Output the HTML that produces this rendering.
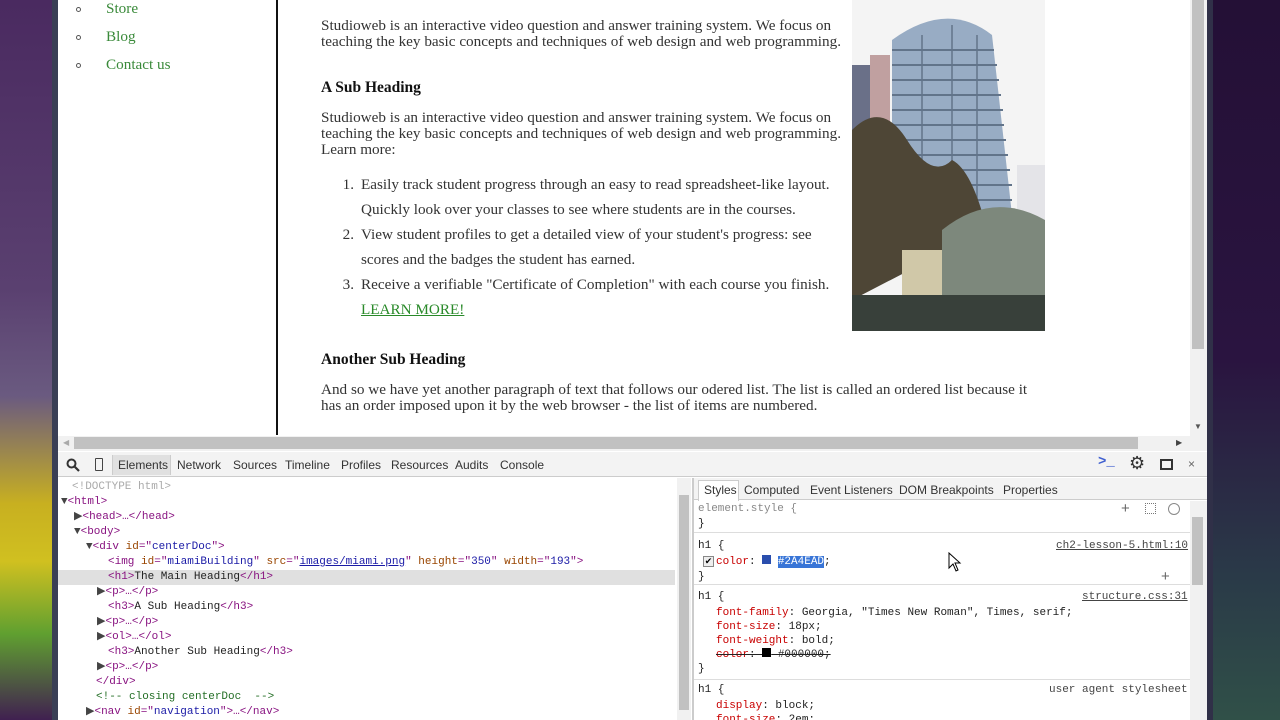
<!DOCTYPE html>
<html><head><style>
*{margin:0;padding:0;box-sizing:border-box}
html,body{width:1280px;height:720px;overflow:hidden}
body{position:relative;background:#2a1440;font-family:"Liberation Serif",serif}
.abs{position:absolute}
.ser{font-family:"Liberation Serif",serif;font-size:15.2px;color:#333}
.mono{font-family:"Liberation Mono",monospace;font-size:11px}
.sans{font-family:"Liberation Sans",sans-serif;font-size:12px;color:#333}
.dom div{position:absolute;white-space:pre;height:15px;line-height:15px}
.t{color:#881280}.a{color:#994500}.v{color:#1a1aa6}.c{color:#236e25}
.p{color:#c80000}
</style></head><body>
<div class="abs" style="left:0;top:0;width:52px;height:720px;background:linear-gradient(180deg,#4a2a60 0%,#5a4070 40%,#6a5a80 55%,#c8b020 70%,#d0c020 78%,#60a030 88%,#402050 100%)"></div>
<div class="abs" style="left:52px;top:0;width:6px;height:720px;background:#3a3f55"></div>
<div class="abs" style="left:1207px;top:0;width:6px;height:720px;background:#303048"></div>
<div class="abs" style="left:1213px;top:0;width:67px;height:720px;background:linear-gradient(180deg,#241036 0%,#2a1440 50%,#2a3a48 80%,#305048 100%)"></div>
<div class="abs" style="left:58px;top:0;width:1132px;height:436px;background:#fff"></div>
<div class="abs" style="left:276px;top:0;width:2px;height:435px;background:#111"></div>
<div class="abs ser" style="left:106px;top:-5px;color:#3a8a3a;line-height:28px">Store<br>Blog<br>Contact us</div>
<div class="abs" style="left:76px;top:7px;width:5px;height:5px;border:1px solid #555;border-radius:50%"></div>
<div class="abs" style="left:76px;top:35px;width:5px;height:5px;border:1px solid #555;border-radius:50%"></div>
<div class="abs" style="left:76px;top:63px;width:5px;height:5px;border:1px solid #555;border-radius:50%"></div>
<div class="abs ser" style="left:321px;top:18px;line-height:16px;width:530px">Studioweb is an interactive video question and answer training system. We focus on teaching the key basic concepts and techniques of web design and web programming.</div>
<div class="abs ser" style="left:321px;top:79px;font-weight:bold;color:#111;font-size:15.5px">A Sub Heading</div>
<div class="abs ser" style="left:321px;top:110px;line-height:16px;width:530px">Studioweb is an interactive video question and answer training system. We focus on teaching the key basic concepts and techniques of web design and web programming. Learn more:</div>
<div class="abs ser" style="left:321px;top:172px;line-height:25px;width:540px">
<div><span style="display:inline-block;width:40px;text-align:right;padding-right:7px">1.</span>Easily track student progress through an easy to read spreadsheet-like layout.</div>
<div style="padding-left:40px">Quickly look over your classes to see where students are in the courses.</div>
<div><span style="display:inline-block;width:40px;text-align:right;padding-right:7px">2.</span>View student profiles to get a detailed view of your student's progress: see</div>
<div style="padding-left:40px">scores and the badges the student has earned.</div>
<div><span style="display:inline-block;width:40px;text-align:right;padding-right:7px">3.</span>Receive a verifiable "Certificate of Completion" with each course you finish.</div>
<div style="padding-left:40px;color:#2a8a2a;text-decoration:underline">LEARN MORE!</div>
</div>
<div class="abs ser" style="left:321px;top:351px;font-weight:bold;color:#111;font-size:15.5px">Another Sub Heading</div>
<div class="abs ser" style="left:321px;top:382px;line-height:16px;width:718px">And so we have yet another paragraph of text that follows our odered list. The list is called an ordered list because it has an order imposed upon it by the web browser - the list of items are numbered.</div>
<svg class="abs" style="left:852px;top:0" width="193" height="331" viewBox="0 0 193 331">
<rect width="193" height="331" fill="#f4f4f4"/>
<rect x="0" y="65" width="22" height="120" fill="#6a7088"/>
<rect x="18" y="55" width="20" height="110" fill="#c0a0a0"/>
<path d="M40 40 Q95 0 140 35 L160 215 L120 225 L40 200 Z" fill="#98acc4"/>
<g stroke="#62748a" stroke-width="2">
<path d="M40 50H142M40 65H145M40 80H147M40 95H149M40 110H151M40 125H152M40 140H154M40 155H156M40 170H158M40 185H160M40 200H160"/>
<path d="M70 35V200M100 25V210M125 35V210" stroke-width="1.5"/></g>
<rect x="165" y="165" width="28" height="60" fill="#e4e4e8"/>
<path d="M0 130 Q30 100 55 140 Q80 180 100 160 Q120 170 135 230 L0 300 Z" fill="#4e4636"/>
<path d="M90 230 Q140 190 193 220 L193 320 L90 320 Z" fill="#7d887c"/>
<rect x="50" y="250" width="40" height="45" fill="#d0c8a8"/>
<rect x="0" y="295" width="193" height="36" fill="#38403a"/>
</svg>
<div class="abs" style="left:1190px;top:0;width:17px;height:436px;background:#f1f1f1"></div>
<div class="abs" style="left:1192px;top:0;width:12px;height:349px;background:#c1c1c1"></div>
<div class="abs" style="left:1194px;top:422px;color:#555;font-size:8px">▼</div>
<div class="abs" style="left:58px;top:436px;width:1149px;height:15px;background:#f1f1f1"></div>
<div class="abs" style="left:74px;top:437px;width:1064px;height:12px;background:#c1c1c1"></div>
<div class="abs" style="left:63px;top:438px;color:#aaa;font-size:8px">◀</div>
<div class="abs" style="left:1176px;top:438px;color:#444;font-size:8px">▶</div>
<div class="abs" style="left:58px;top:451px;width:1149px;height:269px;background:#fff"></div>
<div class="abs" style="left:58px;top:452px;width:1149px;height:25px;background:#f3f3f3;border-bottom:1px solid #ccc"></div>
<svg class="abs" style="left:66px;top:458px" width="14" height="14"><circle cx="5.5" cy="5.5" r="4" fill="none" stroke="#333" stroke-width="2"/><path d="M8.5 8.5L13 13" stroke="#333" stroke-width="2.2"/></svg>
<div class="abs" style="left:95px;top:458px;width:8px;height:13px;border:1.5px solid #444;border-radius:1px"></div>
<div class="abs" style="left:112px;top:455px;width:59px;height:20px;background:#e0e0e0;border-left:1px solid #ccc;border-right:1px solid #ccc"></div>
<div class="abs sans" style="left:118px;top:458px">Elements</div>
<div class="abs sans" style="left:177px;top:458px">Network</div>
<div class="abs sans" style="left:233px;top:458px">Sources</div>
<div class="abs sans" style="left:285px;top:458px">Timeline</div>
<div class="abs sans" style="left:341px;top:458px">Profiles</div>
<div class="abs sans" style="left:391px;top:458px">Resources</div>
<div class="abs sans" style="left:455px;top:458px">Audits</div>
<div class="abs sans" style="left:500px;top:458px">Console</div>
<div class="abs" style="left:1098px;top:454px;color:#4060d0;font-family:'Liberation Mono';font-size:14px;font-weight:bold">&gt;_</div>
<div class="abs" style="left:1129px;top:453px;color:#333;font-size:18px">⚙</div>
<div class="abs" style="left:1160px;top:459px;width:13px;height:11px;border:2px solid #333"></div>
<div class="abs sans" style="left:1188px;top:457px;color:#666">×</div>
<div class="abs" style="left:58px;top:570px;width:617px;height:15px;background:#e0e0e0"></div>
<div class="abs mono dom" style="left:0;top:0">
<div style="left:72px;top:480px;color:#aaa">&lt;!DOCTYPE html&gt;</div>
<div style="left:61px;top:495px"><span style="color:#444">▼</span><span class="t">&lt;html&gt;</span></div>
<div style="left:74px;top:510px"><span style="color:#444">▶</span><span class="t">&lt;head&gt;…&lt;/head&gt;</span></div>
<div style="left:74px;top:525px"><span style="color:#444">▼</span><span class="t">&lt;body&gt;</span></div>
<div style="left:86px;top:540px"><span style="color:#444">▼</span><span class="t">&lt;div </span><span class="a">id</span><span class="t">="</span><span class="v">centerDoc</span><span class="t">"&gt;</span></div>
<div style="left:108px;top:555px"><span class="t">&lt;img </span><span class="a">id</span><span class="t">="</span><span class="v">miamiBuilding</span><span class="t">" </span><span class="a">src</span><span class="t">="</span><span class="v" style="text-decoration:underline">images/miami.png</span><span class="t">" </span><span class="a">height</span><span class="t">="</span><span class="v">350</span><span class="t">" </span><span class="a">width</span><span class="t">="</span><span class="v">193</span><span class="t">"&gt;</span></div>
<div style="left:108px;top:570px"><span class="t">&lt;h1&gt;</span><span style="color:#222">The Main Heading</span><span class="t">&lt;/h1&gt;</span></div>
<div style="left:97px;top:585px"><span style="color:#444">▶</span><span class="t">&lt;p&gt;…&lt;/p&gt;</span></div>
<div style="left:108px;top:600px"><span class="t">&lt;h3&gt;</span><span style="color:#222">A Sub Heading</span><span class="t">&lt;/h3&gt;</span></div>
<div style="left:97px;top:615px"><span style="color:#444">▶</span><span class="t">&lt;p&gt;…&lt;/p&gt;</span></div>
<div style="left:97px;top:630px"><span style="color:#444">▶</span><span class="t">&lt;ol&gt;…&lt;/ol&gt;</span></div>
<div style="left:108px;top:645px"><span class="t">&lt;h3&gt;</span><span style="color:#222">Another Sub Heading</span><span class="t">&lt;/h3&gt;</span></div>
<div style="left:97px;top:660px"><span style="color:#444">▶</span><span class="t">&lt;p&gt;…&lt;/p&gt;</span></div>
<div style="left:96px;top:675px"><span class="t">&lt;/div&gt;</span></div>
<div style="left:96px;top:690px"><span class="c">&lt;!-- closing centerDoc  --&gt;</span></div>
<div style="left:86px;top:705px"><span style="color:#444">▶</span><span class="t">&lt;nav </span><span class="a">id</span><span class="t">="</span><span class="v">navigation</span><span class="t">"&gt;…&lt;/nav&gt;</span></div>
</div>
<div class="abs" style="left:677px;top:478px;width:14px;height:242px;background:#f1f1f1"></div>
<div class="abs" style="left:679px;top:495px;width:10px;height:215px;background:#c1c1c1"></div>
<div class="abs" style="left:692px;top:478px;width:2px;height:242px;background:#ccc"></div>
<div class="abs" style="left:694px;top:478px;width:513px;height:22px;background:#f3f3f3;border-bottom:1px solid #ccc"></div>
<div class="abs" style="left:698px;top:480px;width:41px;height:21px;background:#fff;border:1px solid #ccc;border-bottom:none"></div>
<div class="abs sans" style="left:704px;top:483px">Styles</div>
<div class="abs sans" style="left:744px;top:483px">Computed</div>
<div class="abs sans" style="left:810px;top:483px">Event Listeners</div>
<div class="abs sans" style="left:899px;top:483px">DOM Breakpoints</div>
<div class="abs sans" style="left:1003px;top:483px">Properties</div>
<div class="abs" style="left:1190px;top:501px;width:17px;height:219px;background:#f1f1f1"></div>
<div class="abs" style="left:1192px;top:517px;width:11px;height:68px;background:#c1c1c1"></div>
<div class="abs mono dom" style="left:0;top:0;color:#222">
<div style="left:698px;top:502px;color:#888">element.style {</div>
<div style="left:698px;top:517px">}</div>
<div style="left:698px;top:539px">h1 {</div>
<div style="left:1056px;top:539px;text-decoration:underline;color:#444">ch2-lesson-5.html:10</div>
<div style="left:716px;top:555px"><span class="p">color</span>: <span style="display:inline-block;width:9px;height:9px;background:#2a4ead"></span> <span style="background:#3875d7;color:#fff">#2A4EAD</span>;</div>
<div style="left:698px;top:570px">}</div>
<div style="left:698px;top:590px">h1 {</div>
<div style="left:1082px;top:590px;text-decoration:underline;color:#444">structure.css:31</div>
<div style="left:716px;top:606px"><span class="p">font-family</span>: Georgia, "Times New Roman", Times, serif;</div>
<div style="left:716px;top:620px"><span class="p">font-size</span>: 18px;</div>
<div style="left:716px;top:634px"><span class="p">font-weight</span>: bold;</div>
<div style="left:716px;top:648px;text-decoration:line-through"><span class="p">color</span>: <span style="display:inline-block;width:9px;height:9px;background:#000"></span> #000000;</div>
<div style="left:698px;top:662px">}</div>
<div style="left:698px;top:683px">h1 {</div>
<div style="left:1049px;top:683px;color:#444">user agent stylesheet</div>
<div style="left:716px;top:699px"><span class="p">display</span>: block;</div>
<div style="left:716px;top:713px"><span class="p">font-size</span>: 2em;</div>
</div>
<div class="abs" style="left:703px;top:556px;width:11px;height:11px;border:1px solid #888;background:#eee;font-size:9px;line-height:9px;text-align:center">✔</div>
<div class="abs" style="left:694px;top:532px;width:496px;height:1px;background:#ddd"></div>
<div class="abs" style="left:694px;top:584px;width:496px;height:1px;background:#ddd"></div>
<div class="abs" style="left:694px;top:679px;width:496px;height:1px;background:#ddd"></div>
<div class="abs sans" style="left:1121px;top:500px;font-size:15px;color:#666">+</div>
<div class="abs sans" style="left:1145px;top:503px;width:11px;height:11px;border:1px dotted #777"></div>
<div class="abs sans" style="left:1161px;top:568px;font-size:15px;color:#666">+</div>
<div class="abs" style="left:1168px;top:503px;width:12px;height:12px;border:1.5px solid #888;border-radius:50%"></div>
<svg class="abs" style="left:948px;top:552px" width="14" height="20"><path d="M1 1L1 16L5 12L8 19L10 18L7 11L12 11Z" fill="#fff" stroke="#000"/></svg>
</body></html>
